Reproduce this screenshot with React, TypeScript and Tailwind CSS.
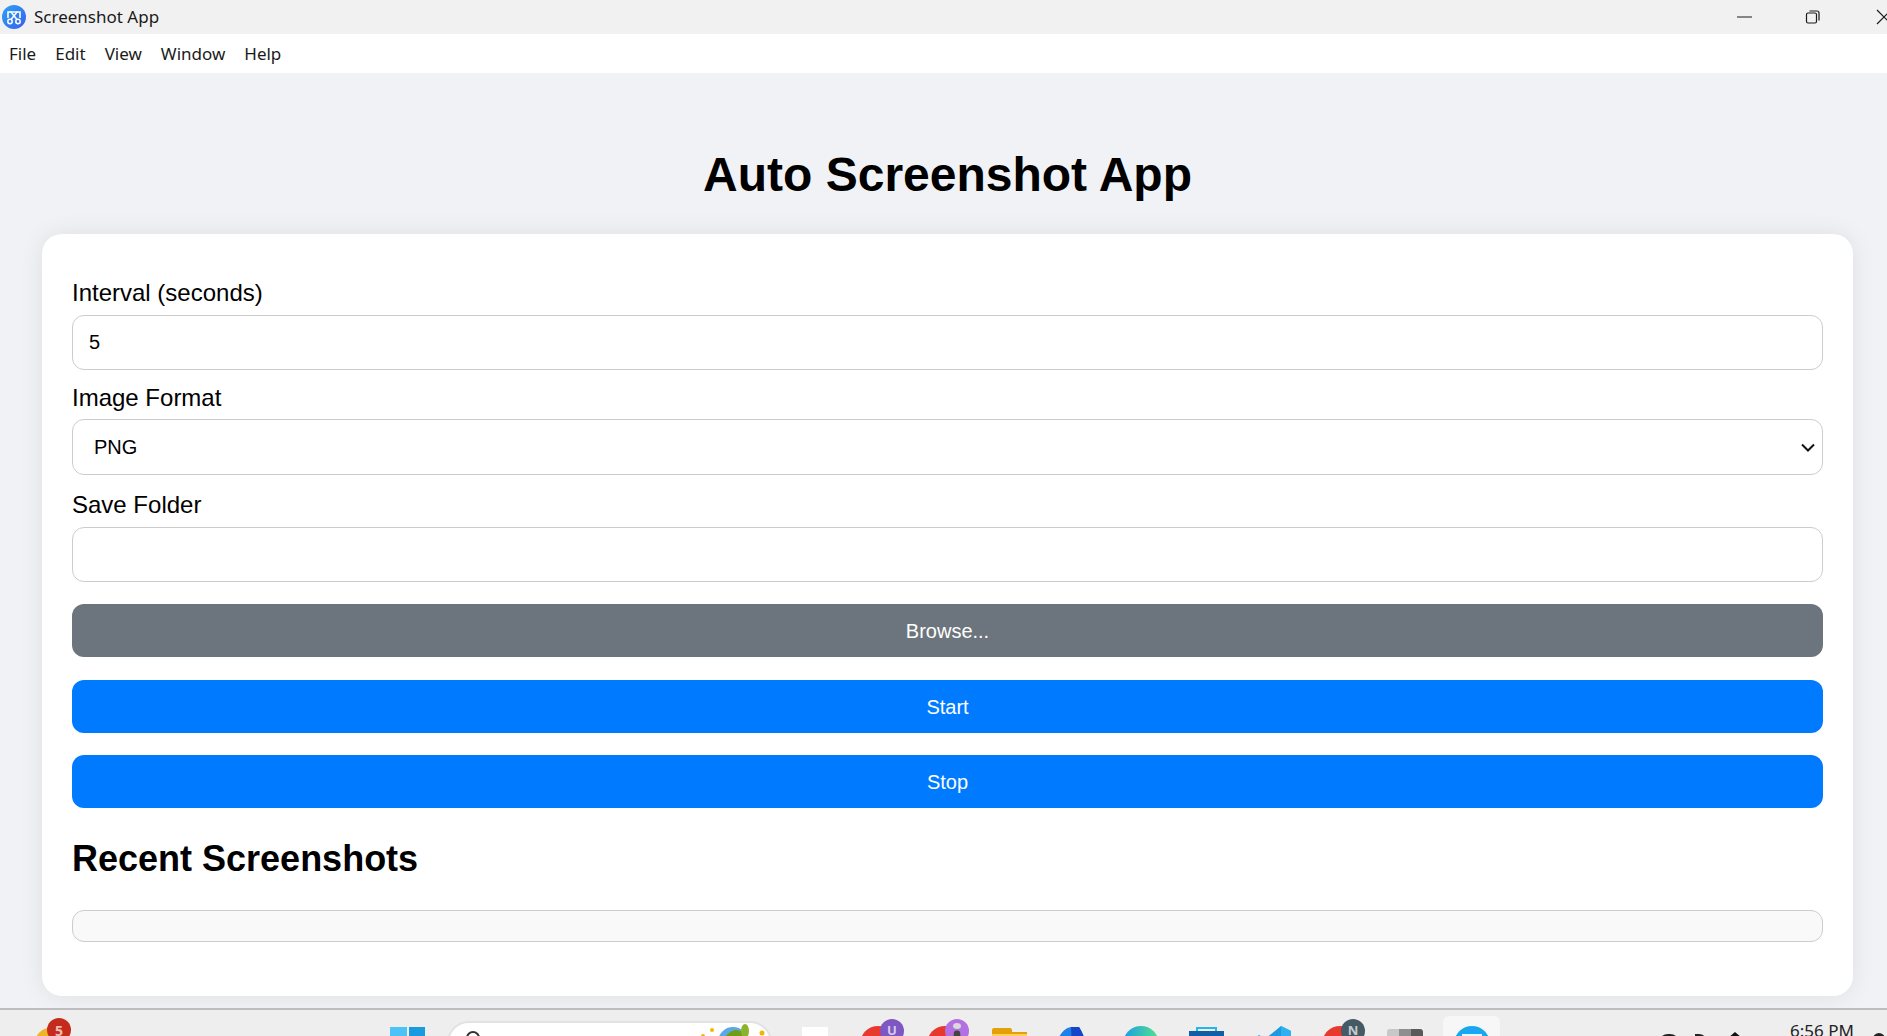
const sans = 'font-["Liberation_Sans",Arial,sans-serif]'

function AppIcon() {
  return (
    <svg width="24" height="24" viewBox="0 0 24 24" className="ml-[2px] mr-[8px] shrink-0">
      <defs>
        <linearGradient id="appIconFill" x1="0" y1="0" x2="1" y2="1">
          <stop offset="0" stopColor="#2aa3f5" />
          <stop offset="1" stopColor="#3a5ef0" />
        </linearGradient>
      </defs>
      <circle cx="12" cy="12" r="12" fill="url(#appIconFill)" />
      <path d="M6 13V7h12v6" fill="none" stroke="#fff" strokeWidth="1.6" />
      <path d="M8.5 6.5l6.5 8M15.5 6.5l-6.5 8" stroke="#fff" strokeWidth="1.5" />
      <circle cx="8" cy="16.5" r="2.2" fill="none" stroke="#fff" strokeWidth="1.5" />
      <circle cx="16" cy="16.5" r="2.2" fill="none" stroke="#fff" strokeWidth="1.5" />
    </svg>
  )
}

function WindowButtons() {
  return (
    <div className="ml-auto flex items-center">
      <svg width="16" height="2" viewBox="0 0 16 2" className="mr-[52px]">
        <path d="M0 1h15" stroke="#1a1a1a" strokeWidth="1" />
      </svg>
      <svg width="16" height="16" viewBox="0 0 16 16" className="mr-[55px]">
        <rect x="1.5" y="4" width="10" height="10" rx="1.5" fill="none" stroke="#1a1a1a" strokeWidth="1.2" />
        <path d="M4.5 2h7.5a2 2 0 0 1 2 2v7.5" fill="none" stroke="#1a1a1a" strokeWidth="1.2" />
      </svg>
      <svg width="16" height="16" viewBox="0 0 16 16" className="mr-[-5px]">
        <path d="M1 1l14 14M15 1L1 15" stroke="#1a1a1a" strokeWidth="1.2" />
      </svg>
    </div>
  )
}

function Badge({ color, className, children }: { color: string; className: string; children: React.ReactNode }) {
  return (
    <span
      className={`absolute flex h-[24px] w-[24px] items-center justify-center rounded-full text-[13px] font-bold text-white/70 ${color} ${className}`}
    >
      {children}
    </span>
  )
}

function ChromeWithBadge({ className, badge }: { className: string; badge: React.ReactNode }) {
  return (
    <div className={`relative mt-[16px] w-[40px] shrink-0 ${className}`}>
      <div className="h-[36px] w-[36px] rounded-full bg-[#e8392f]" />
      {badge}
    </div>
  )
}

function Taskbar() {
  return (
    <div className="flex h-[28px] shrink-0 overflow-hidden border-t-2 border-[#bdbdbd] bg-[#eeeeee] font-['Noto_Sans',sans-serif]">
      <div className="relative ml-[35px] mt-[18px] w-[34px] shrink-0">
        <div className="h-[30px] w-[30px] rounded-full bg-[#f0b429]" />
        <Badge color="bg-[#c42b1c]" className="left-[12px] top-[-10px] text-[14px] text-white">5</Badge>
      </div>

      <div className="ml-[321px] mt-[17px] grid h-[40px] w-[35px] shrink-0 grid-cols-2 gap-[2px]">
        <div className="h-[16px] bg-[#4cc2f5]" />
        <div className="h-[16px] bg-[#1a9be0]" />
      </div>

      <div className="ml-[22px] mt-[11px] flex h-[40px] w-[325px] shrink-0 rounded-t-[22px] border-2 border-[#e2e2e2] bg-white">
        <div className="ml-[17px] mt-[8px] h-[14px] w-[14px] rounded-full border-2 border-[#333]" />
        <svg width="70" height="14" viewBox="0 0 70 14" className="ml-auto mr-[2px] mt-[1px]">
          <circle cx="5" cy="12" r="2" fill="#f5b400" />
          <circle cx="14" cy="6" r="2" fill="#f5b400" />
          <circle cx="35" cy="18" r="15" fill="#5aa9e6" />
          <path d="M28 12c6-8 14-8 20 0v6H28z" fill="#6f9e12" />
          <ellipse cx="47" cy="7" rx="4" ry="7" fill="#8cb42a" />
          <circle cx="64" cy="9" r="2.5" fill="#f5b400" />
        </svg>
      </div>

      <div className="ml-[30px] mt-[17px] h-[30px] w-[26px] shrink-0 bg-white" />

      <ChromeWithBadge
        className="ml-[32px]"
        badge={<Badge color="bg-[#7e57c2]" className="left-[20px] top-[-7px]">U</Badge>}
      />
      <ChromeWithBadge
        className="ml-[27px]"
        badge={
          <Badge color="bg-[#b370e0]" className="left-[18px] top-[-7px]">
            <svg width="14" height="20" viewBox="0 0 14 20">
              <ellipse cx="7" cy="5" rx="4" ry="3" fill="#d9d9d9" />
              <path d="M3 20l1-9c1-2 5-2 6 0l1 9z" fill="#444" />
            </svg>
          </Badge>
        }
      />

      <div className="ml-[25px] mt-[18px] w-[35px] shrink-0">
        <div className="h-[4px] w-[20px] rounded-t-[2px] bg-[#e3a008]" />
        <div className="h-[20px] border-t-2 border-[#e3a008] bg-[#fbd15b]" />
      </div>

      <svg width="28" height="20" viewBox="0 0 28 20" className="ml-[31px] mt-[17px] shrink-0">
        <path d="M0 12C3 6 7 1 13 0h8c4 6 6 12 7 20H0z" fill="#1f7fe8" />
        <path d="M13 0h8c4 6 6 12 7 20H14z" fill="#1446c8" />
      </svg>

      <svg width="36" height="20" viewBox="0 0 36 20" className="ml-[37px] mt-[16px] shrink-0">
        <defs>
          <linearGradient id="edgeFill" x1="0" y1="0" x2="1" y2="0">
            <stop offset="0" stopColor="#1b9de2" />
            <stop offset="1" stopColor="#54e38e" />
          </linearGradient>
        </defs>
        <circle cx="18" cy="18" r="18" fill="url(#edgeFill)" />
      </svg>

      <svg width="35" height="20" viewBox="0 0 35 20" className="ml-[30px] mt-[17px] shrink-0">
        <path d="M8 6V1h19v5" fill="none" stroke="#28b4ee" strokeWidth="2" />
        <rect x="0" y="4" width="35" height="16" fill="#0f5fa6" />
      </svg>

      <svg width="36" height="20" viewBox="0 0 36 20" className="ml-[31px] mt-[16px] shrink-0">
        <path d="M0 12l4-3 6 4L26 0l10 5v15H0z" fill="#1f9ae0" />
        <path d="M26 0l10 5v15H26z" fill="#2fb0f0" />
      </svg>

      <ChromeWithBadge
        className="ml-[31px]"
        badge={<Badge color="bg-[#455a64]" className="left-[19px] top-[-7px]">N</Badge>}
      />

      <div className="ml-[25px] mt-[19px] flex h-[20px] w-[36px] shrink-0 overflow-hidden rounded-t-[3px]">
        <div className="flex-1 bg-[#c8c8c8]" />
        <div className="flex-1 bg-[#8f8f8f]" />
        <div className="flex-1 bg-[#5a5a5a]" />
      </div>

      <div className="ml-[20px] mt-[6px] flex h-[40px] w-[57px] shrink-0 justify-center rounded-t-[6px] bg-[#f7f7f7] pt-[10px]">
        <div className="flex h-[36px] w-[36px] justify-center rounded-full bg-[#19a7f0] pt-[8px]">
          <div className="h-[10px] w-[20px] bg-[#e6f5fe]" />
        </div>
      </div>

      <div className="ml-[158px] mt-[24px] h-[10px] w-[22px] shrink-0 rounded-t-full border-t-2 border-[#222]" />
      <div className="ml-[15px] mt-[24px] h-[8px] w-[12px] shrink-0 rounded-tr-full border-t-2 border-r-2 border-[#222]" />
      <svg width="14" height="6" viewBox="0 0 14 6" className="ml-[21px] mt-[22px] shrink-0">
        <path d="M0 6l7-6 7 6z" fill="#111" />
      </svg>
      <div className="ml-[48px] mt-[10px] shrink-0 text-[17px] leading-[22px] text-[#222]">6:56 PM</div>
      <div className="ml-[19px] mt-[23px] h-[8px] w-[12px] shrink-0 rounded-t-full bg-[#222]" />
    </div>
  )
}

const fieldClass = 'block h-[55px] w-full rounded-[12px] border border-[#cccccc] bg-white px-[16px] text-[20px] text-black outline-none'
const labelClass = 'block text-[24px] leading-[28px] text-black'
const buttonClass = 'block h-[53px] w-full rounded-[12px] text-center text-[20px] text-white'

export default function App() {
  return (
    <div className={`flex h-[1036px] w-[1887px] flex-col overflow-hidden bg-[#f0f2f5] ${sans}`}>
      <div className="flex h-[34px] shrink-0 items-center bg-[#f1f1f1] pb-[1px] font-['Noto_Sans',sans-serif] text-[17px] text-[#1a1a1a]">
        <AppIcon />
        <span>Screenshot App</span>
        <WindowButtons />
      </div>
      <div className="flex h-[39px] shrink-0 items-center gap-[19px] bg-white pl-[9px] font-['Noto_Sans',sans-serif] text-[17px] text-[#1a1a1a]">
        {['File', 'Edit', 'View', 'Window', 'Help'].map(item => (
          <span key={item}>{item}</span>
        ))}
      </div>

      <main className="flex min-h-0 flex-1 flex-col pl-[42px] pr-[34px]">
        <h1 className="mt-[74px] text-center text-[48px] leading-[55px] font-bold text-black">Auto Screenshot App</h1>
        <div className="mt-[32px] h-[762px] shrink-0 rounded-[20px] bg-white px-[30px] pt-[45px] shadow-[0_0_24px_rgba(0,0,0,0.08)]">
          <label className={labelClass}>Interval (seconds)</label>
          <input readOnly value="5" className={`${fieldClass} mt-[8px]`} />
          <label className={`${labelClass} mt-[14px]`}>Image Format</label>
          <div className="relative mt-[7px]">
            <select className={`${fieldClass} h-[56px] appearance-none pl-[21px]`}>
              <option>PNG</option>
            </select>
            <svg width="14" height="9" viewBox="0 0 14 9" className="absolute right-[8px] top-[24px]">
              <path d="M1 1.5l6 6 6-6" fill="none" stroke="#111" strokeWidth="2" />
            </svg>
          </div>
          <label className={`${labelClass} mt-[16px]`}>Save Folder</label>
          <input readOnly value="" className={`${fieldClass} mt-[8px]`} />
          <button className={`${buttonClass} mt-[22px] bg-[#6c757d]`}>Browse...</button>
          <button className={`${buttonClass} mt-[23px] bg-[#007bff]`}>Start</button>
          <button className={`${buttonClass} mt-[22px] bg-[#007bff]`}>Stop</button>
          <h2 className="mt-[30px] text-[36px] leading-[42px] font-bold text-black">Recent Screenshots</h2>
          <div className="mt-[30px] h-[32px] rounded-[12px] border border-[#cccccc] bg-[#f9f9f9]" />
        </div>
      </main>

      <Taskbar />
    </div>
  )
}
